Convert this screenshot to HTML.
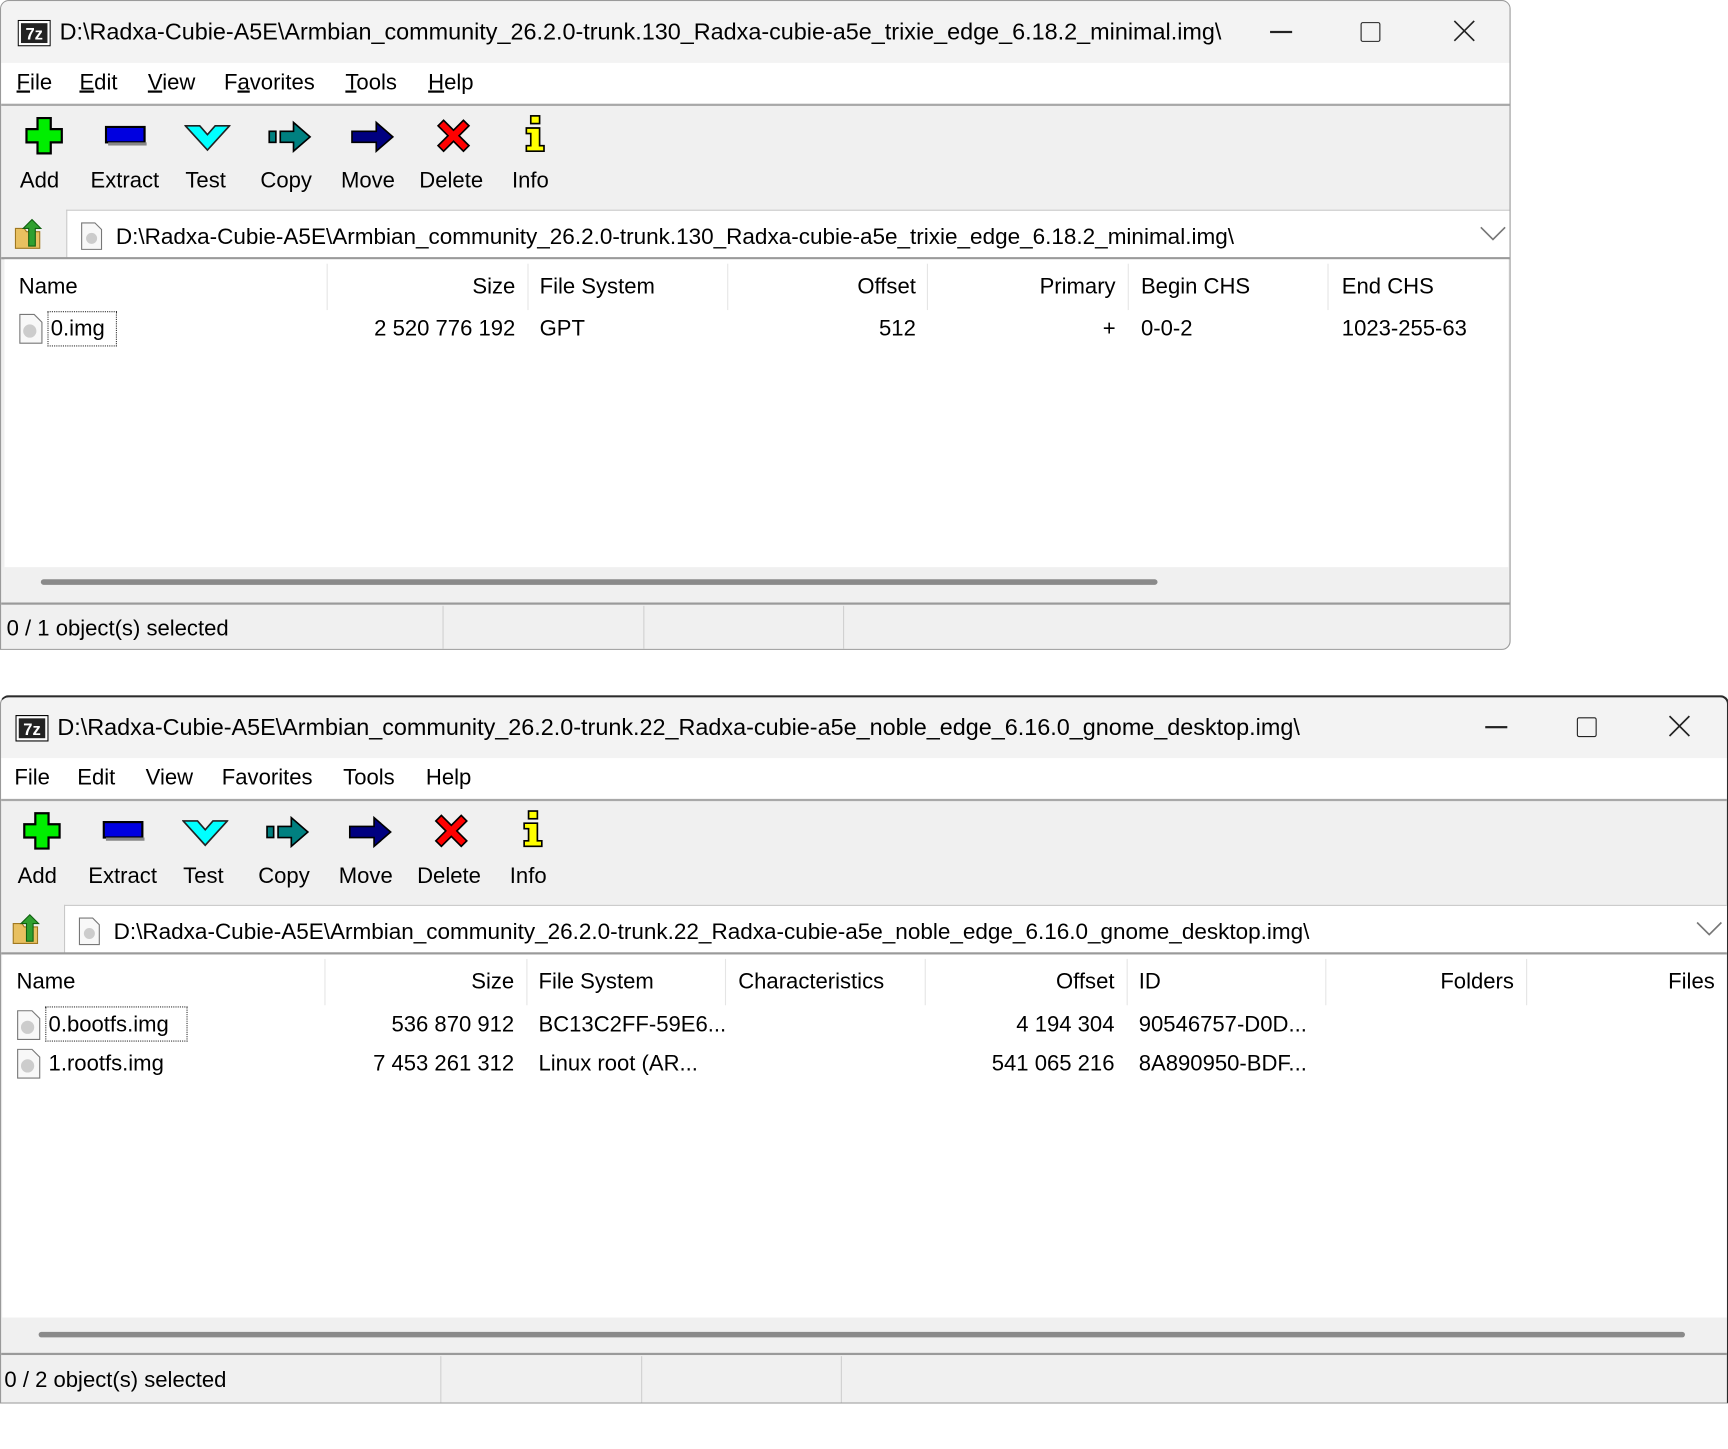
<!DOCTYPE html>
<html><head><meta charset="utf-8">
<style>
html,body{margin:0;padding:0;background:#fff;width:1728px;height:1449px;overflow:hidden}
#s{position:absolute;left:0;top:0;width:1566px;height:1313px;transform:scale(1.10345);transform-origin:0 0;font-family:"Liberation Sans",sans-serif;color:#000}
.a{position:absolute}
.t{position:absolute;font-size:20px;white-space:nowrap;line-height:24px}
.r{text-align:right}
.win{position:absolute;overflow:hidden;background:#f0f0f0}
.ico{position:absolute}
.sep{position:absolute;width:1px;background:#e5e5e5}
.ssep{position:absolute;width:1px;background:#d0d0d0}
u{text-decoration:underline}
</style></head><body><div id="s">

<!-- WINDOW 1 -->
<div class="win" style="left:0;top:0;width:1367px;height:587px;border:1px solid #9a9a9a;border-radius:8px 8px 8px 0">
  <div class="a" style="left:0;top:0;width:1367px;height:56px;background:#f3f3f3"></div>
  <svg class="ico" style="left:15px;top:17px" width="30" height="24" viewBox="0 0 30 24"><rect x="0.5" y="0.5" width="29" height="23" fill="#fff" stroke="#000"/><rect x="3" y="3" width="24" height="18" fill="#222"/><text x="15" y="18" font-family="Liberation Sans" font-weight="bold" font-size="15" fill="#fff" text-anchor="middle">7z</text></svg>
  <div class="t" style="left:53px;top:17px;font-size:21.2px">D:\Radxa-Cubie-A5E\Armbian_community_26.2.0-trunk.130_Radxa-cubie-a5e_trixie_edge_6.18.2_minimal.img\</div>
  <div class="a" style="left:1150px;top:27px;width:20px;height:1.5px;background:#222"></div>
  <div class="a" style="left:1232px;top:19px;width:16px;height:16px;border:1.5px solid #222;border-radius:2px"></div>
  <svg class="ico" style="left:1316px;top:17px" width="20" height="20"><path d="M1 1L19 19M19 1L1 19" stroke="#222" stroke-width="1.5"/></svg>
  <div class="a" style="left:0;top:56px;width:1367px;height:37px;background:#fff"></div>
  <div class="t" style="left:14px;top:62px"><u>F</u>ile</div>
  <div class="t" style="left:71px;top:62px"><u>E</u>dit</div>
  <div class="t" style="left:133px;top:62px"><u>V</u>iew</div>
  <div class="t" style="left:202px;top:62px">F<u>a</u>vorites</div>
  <div class="t" style="left:312px;top:62px"><u>T</u>ools</div>
  <div class="t" style="left:387px;top:62px"><u>H</u>elp</div>
  <div class="a" style="left:0;top:93px;width:1367px;height:2px;background:#a8a8a8"></div>
  <svg class="ico" style="left:21px;top:104px" width="36" height="36" viewBox="0 0 36 36"><path d="M12 2H24V12H34V24H24V34H12V24H2V12H12Z" fill="#00ee00" stroke="#000" stroke-width="2"/></svg>
  <svg class="ico" style="left:94px;top:113px" width="38" height="18"><rect x="1" y="1" width="35" height="14" fill="#0000e0" stroke="#000" stroke-width="2"/><rect x="3" y="15" width="35" height="3" fill="#888"/></svg>
  <svg class="ico" style="left:166px;top:111px" width="42" height="26" viewBox="0 0 42 26"><path d="M1 2H14L21 10L28 2H41L21 24Z" fill="#00ffff" stroke="#222" stroke-width="1.5"/></svg>
  <svg class="ico" style="left:241px;top:107px" width="42" height="32" viewBox="0 0 42 32"><rect x="2" y="11" width="6" height="10" fill="#008080" stroke="#000" stroke-width="1.5"/><path d="M12 11H24V3L39 16L24 29V21H12Z" fill="#008080" stroke="#000" stroke-width="1.5"/></svg>
  <svg class="ico" style="left:316px;top:107px" width="42" height="32" viewBox="0 0 42 32"><path d="M2 11H24V3L39 16L24 29V21H2Z" fill="#000080" stroke="#000" stroke-width="1.5"/></svg>
  <svg class="ico" style="left:393px;top:105px" width="34" height="34" viewBox="0 0 34 34"><path d="M3 8L8 3L17 12L26 3L31 8L22 17L31 26L26 31L17 22L8 31L3 26L12 17Z" fill="#ff0000" stroke="#000" stroke-width="1.5"/></svg>
  <svg class="ico" style="left:473px;top:102px" width="22" height="36" viewBox="0 0 22 36"><rect x="7" y="2" width="8" height="7" fill="#ffff00" stroke="#000" stroke-width="1.5"/><path d="M3 13H15V29H19V34H3V29H7V18H3Z" fill="#ffff00" stroke="#000" stroke-width="1.5"/></svg>
  <div class="t" style="left:17px;top:151px">Add</div>
  <div class="t" style="left:81px;top:151px">Extract</div>
  <div class="t" style="left:167px;top:151px">Test</div>
  <div class="t" style="left:235px;top:151px">Copy</div>
  <div class="t" style="left:308px;top:151px">Move</div>
  <div class="t" style="left:379px;top:151px">Delete</div>
  <div class="t" style="left:463px;top:151px">Info</div>
  <svg class="ico" style="left:11px;top:196px" width="28" height="30" viewBox="0 0 28 30"><path d="M2 10H10L12 13H24V28H2Z" fill="#e8c060" stroke="#a07820"/><path d="M14 26V10H9L17 2L25 10H20V26Z" fill="#30a030" stroke="#106010"/></svg>
  <div class="a" style="left:59px;top:189px;width:1308px;height:43px;background:#fff;border-left:1px solid #c8c8c8;border-top:1px solid #c8c8c8"></div>
  <svg class="ico" style="left:72px;top:200px" width="20" height="26" viewBox="0 0 20 26"><path d="M1 1H13L19 7V25H1Z" fill="#f8f8f8" stroke="#777"/><circle cx="10" cy="15" r="5" fill="#ccc"/></svg>
  <div class="t" style="left:104px;top:202px;font-size:20.4px">D:\Radxa-Cubie-A5E\Armbian_community_26.2.0-trunk.130_Radxa-cubie-a5e_trixie_edge_6.18.2_minimal.img\</div>
  <svg class="ico" style="left:1340px;top:204px" width="24" height="14"><path d="M1 1L12 12L23 1" stroke="#777" stroke-width="1.5" fill="none"/></svg>
  <div class="a" style="left:0;top:232px;width:1367px;height:2px;background:#9a9a9a"></div>
  <div class="a" style="left:3px;top:234px;width:1363px;height:311px;background:#fff"></div>
  <div class="sep" style="left:295px;top:238px;height:42px"></div>
  <div class="sep" style="left:477px;top:238px;height:42px"></div>
  <div class="sep" style="left:658px;top:238px;height:42px"></div>
  <div class="sep" style="left:839px;top:238px;height:42px"></div>
  <div class="sep" style="left:1021px;top:238px;height:42px"></div>
  <div class="sep" style="left:1202px;top:238px;height:42px"></div>
  <div class="t" style="left:16px;top:247px">Name</div>
  <div class="t r" style="left:300px;top:247px;width:166px">Size</div>
  <div class="t" style="left:488px;top:247px">File System</div>
  <div class="t r" style="left:660px;top:247px;width:169px">Offset</div>
  <div class="t r" style="left:840px;top:247px;width:170px">Primary</div>
  <div class="t" style="left:1033px;top:247px">Begin CHS</div>
  <div class="t" style="left:1215px;top:247px">End CHS</div>
  <svg class="ico" style="left:16px;top:283px" width="22" height="28" viewBox="0 0 22 28"><path d="M1 1H14L21 8V27H1Z" fill="#f8f8f8" stroke="#777"/><circle cx="10" cy="16" r="6" fill="#ccc"/></svg>
  <div class="a" style="left:42px;top:281px;width:61px;height:30px;border:1.5px dotted #333"></div>
  <div class="t" style="left:45px;top:285px">0.img</div>
  <div class="t r" style="left:300px;top:285px;width:166px">2 520 776 192</div>
  <div class="t" style="left:488px;top:285px">GPT</div>
  <div class="t r" style="left:660px;top:285px;width:169px">512</div>
  <div class="t r" style="left:840px;top:285px;width:170px">+</div>
  <div class="t" style="left:1033px;top:285px">0-0-2</div>
  <div class="t" style="left:1215px;top:285px">1023-255-63</div>
  <div class="a" style="left:3px;top:513px;width:1363px;height:32px;background:#f0f0f0"></div>
  <div class="a" style="left:36px;top:524px;width:1012px;height:5px;background:#8a8a8a;border-radius:3px"></div>
  <div class="a" style="left:0;top:545px;width:1367px;height:2px;background:#9a9a9a"></div>
  <div class="ssep" style="left:400px;top:548px;height:40px"></div>
  <div class="ssep" style="left:582px;top:548px;height:40px"></div>
  <div class="ssep" style="left:763px;top:548px;height:40px"></div>
  <div class="t" style="left:5px;top:557px">0 / 1 object(s) selected</div>
</div>

<!-- WINDOW 2 -->
<div class="win" style="left:0;top:630px;width:1564px;height:639px;border-top:2px solid #2a2a2a;border-right:2px solid #2a2a2a;border-left:1px solid #9a9a9a;border-bottom:1px solid #9a9a9a;border-radius:8px 8px 0 0">
  <div class="a" style="left:0;top:0;width:1564px;height:55px;background:#f3f3f3"></div>
  <svg class="ico" style="left:13px;top:16px" width="30" height="24" viewBox="0 0 30 24"><rect x="0.5" y="0.5" width="29" height="23" fill="#fff" stroke="#000"/><rect x="3" y="3" width="24" height="18" fill="#222"/><text x="15" y="18" font-family="Liberation Sans" font-weight="bold" font-size="15" fill="#fff" text-anchor="middle">7z</text></svg>
  <div class="t" style="left:51px;top:16px;font-size:21.2px">D:\Radxa-Cubie-A5E\Armbian_community_26.2.0-trunk.22_Radxa-cubie-a5e_noble_edge_6.16.0_gnome_desktop.img\</div>
  <div class="a" style="left:1345px;top:26px;width:20px;height:1.5px;background:#222"></div>
  <div class="a" style="left:1428px;top:18px;width:16px;height:16px;border:1.5px solid #222;border-radius:2px"></div>
  <svg class="ico" style="left:1511px;top:16px" width="20" height="20"><path d="M1 1L19 19M19 1L1 19" stroke="#222" stroke-width="1.5"/></svg>
  <div class="a" style="left:0;top:55px;width:1564px;height:37px;background:#fff"></div>
  <div class="t" style="left:12px;top:61px">File</div>
  <div class="t" style="left:69px;top:61px">Edit</div>
  <div class="t" style="left:131px;top:61px">View</div>
  <div class="t" style="left:200px;top:61px">Favorites</div>
  <div class="t" style="left:310px;top:61px">Tools</div>
  <div class="t" style="left:385px;top:61px">Help</div>
  <div class="a" style="left:0;top:92px;width:1564px;height:2px;background:#a8a8a8"></div>
  <svg class="ico" style="left:19px;top:103px" width="36" height="36" viewBox="0 0 36 36"><path d="M12 2H24V12H34V24H24V34H12V24H2V12H12Z" fill="#00ee00" stroke="#000" stroke-width="2"/></svg>
  <svg class="ico" style="left:92px;top:112px" width="38" height="18"><rect x="1" y="1" width="35" height="14" fill="#0000e0" stroke="#000" stroke-width="2"/><rect x="3" y="15" width="35" height="3" fill="#888"/></svg>
  <svg class="ico" style="left:164px;top:110px" width="42" height="26" viewBox="0 0 42 26"><path d="M1 2H14L21 10L28 2H41L21 24Z" fill="#00ffff" stroke="#222" stroke-width="1.5"/></svg>
  <svg class="ico" style="left:239px;top:106px" width="42" height="32" viewBox="0 0 42 32"><rect x="2" y="11" width="6" height="10" fill="#008080" stroke="#000" stroke-width="1.5"/><path d="M12 11H24V3L39 16L24 29V21H12Z" fill="#008080" stroke="#000" stroke-width="1.5"/></svg>
  <svg class="ico" style="left:314px;top:106px" width="42" height="32" viewBox="0 0 42 32"><path d="M2 11H24V3L39 16L24 29V21H2Z" fill="#000080" stroke="#000" stroke-width="1.5"/></svg>
  <svg class="ico" style="left:391px;top:104px" width="34" height="34" viewBox="0 0 34 34"><path d="M3 8L8 3L17 12L26 3L31 8L22 17L31 26L26 31L17 22L8 31L3 26L12 17Z" fill="#ff0000" stroke="#000" stroke-width="1.5"/></svg>
  <svg class="ico" style="left:471px;top:101px" width="22" height="36" viewBox="0 0 22 36"><rect x="7" y="2" width="8" height="7" fill="#ffff00" stroke="#000" stroke-width="1.5"/><path d="M3 13H15V29H19V34H3V29H7V18H3Z" fill="#ffff00" stroke="#000" stroke-width="1.5"/></svg>
  <div class="t" style="left:15px;top:150px">Add</div>
  <div class="t" style="left:79px;top:150px">Extract</div>
  <div class="t" style="left:165px;top:150px">Test</div>
  <div class="t" style="left:233px;top:150px">Copy</div>
  <div class="t" style="left:306px;top:150px">Move</div>
  <div class="t" style="left:377px;top:150px">Delete</div>
  <div class="t" style="left:461px;top:150px">Info</div>
  <svg class="ico" style="left:9px;top:195px" width="28" height="30" viewBox="0 0 28 30"><path d="M2 10H10L12 13H24V28H2Z" fill="#e8c060" stroke="#a07820"/><path d="M14 26V10H9L17 2L25 10H20V26Z" fill="#30a030" stroke="#106010"/></svg>
  <div class="a" style="left:57px;top:188px;width:1507px;height:43px;background:#fff;border-left:1px solid #c8c8c8;border-top:1px solid #c8c8c8"></div>
  <svg class="ico" style="left:70px;top:199px" width="20" height="26" viewBox="0 0 20 26"><path d="M1 1H13L19 7V25H1Z" fill="#f8f8f8" stroke="#777"/><circle cx="10" cy="15" r="5" fill="#ccc"/></svg>
  <div class="t" style="left:102px;top:201px;font-size:20.4px">D:\Radxa-Cubie-A5E\Armbian_community_26.2.0-trunk.22_Radxa-cubie-a5e_noble_edge_6.16.0_gnome_desktop.img\</div>
  <svg class="ico" style="left:1536px;top:203px" width="24" height="14"><path d="M1 1L12 12L23 1" stroke="#777" stroke-width="1.5" fill="none"/></svg>
  <div class="a" style="left:0;top:231px;width:1564px;height:2px;background:#9a9a9a"></div>
  <div class="a" style="left:1px;top:233px;width:1563px;height:329px;background:#fff"></div>
  <div class="sep" style="left:293px;top:237px;height:42px"></div>
  <div class="sep" style="left:476px;top:237px;height:42px"></div>
  <div class="sep" style="left:656px;top:237px;height:42px"></div>
  <div class="sep" style="left:837px;top:237px;height:42px"></div>
  <div class="sep" style="left:1020px;top:237px;height:42px"></div>
  <div class="sep" style="left:1200px;top:237px;height:42px"></div>
  <div class="sep" style="left:1382px;top:237px;height:42px"></div>
  <div class="t" style="left:14px;top:246px">Name</div>
  <div class="t r" style="left:300px;top:246px;width:165px">Size</div>
  <div class="t" style="left:487px;top:246px">File System</div>
  <div class="t" style="left:668px;top:246px">Characteristics</div>
  <div class="t r" style="left:840px;top:246px;width:169px">Offset</div>
  <div class="t" style="left:1031px;top:246px">ID</div>
  <div class="t r" style="left:1210px;top:246px;width:161px">Folders</div>
  <div class="t r" style="left:1390px;top:246px;width:163px">Files</div>
  <svg class="ico" style="left:14px;top:283px" width="22" height="28" viewBox="0 0 22 28"><path d="M1 1H14L21 8V27H1Z" fill="#f8f8f8" stroke="#777"/><circle cx="10" cy="16" r="6" fill="#ccc"/></svg>
  <svg class="ico" style="left:14px;top:318px" width="22" height="28" viewBox="0 0 22 28"><path d="M1 1H14L21 8V27H1Z" fill="#f8f8f8" stroke="#777"/><circle cx="10" cy="16" r="6" fill="#ccc"/></svg>
  <div class="a" style="left:40px;top:280px;width:127px;height:30px;border:1.5px dotted #333"></div>
  <div class="t" style="left:43px;top:285px">0.bootfs.img</div>
  <div class="t r" style="left:300px;top:285px;width:165px">536 870 912</div>
  <div class="t" style="left:487px;top:285px">BC13C2FF-59E6...</div>
  <div class="t r" style="left:840px;top:285px;width:169px">4 194 304</div>
  <div class="t" style="left:1031px;top:285px">90546757-D0D...</div>
  <div class="t" style="left:43px;top:320px">1.rootfs.img</div>
  <div class="t r" style="left:300px;top:320px;width:165px">7 453 261 312</div>
  <div class="t" style="left:487px;top:320px">Linux root (AR...</div>
  <div class="t r" style="left:840px;top:320px;width:169px">541 065 216</div>
  <div class="t" style="left:1031px;top:320px">8A890950-BDF...</div>
  <div class="a" style="left:1px;top:562px;width:1563px;height:32px;background:#f0f0f0"></div>
  <div class="a" style="left:34px;top:575px;width:1492px;height:5px;background:#8a8a8a;border-radius:3px"></div>
  <div class="a" style="left:0;top:594px;width:1564px;height:2px;background:#9a9a9a"></div>
  <div class="ssep" style="left:398px;top:597px;height:42px"></div>
  <div class="ssep" style="left:580px;top:597px;height:42px"></div>
  <div class="ssep" style="left:761px;top:597px;height:42px"></div>
  <div class="t" style="left:3px;top:607px">0 / 2 object(s) selected</div>
</div>

</div></body></html>
